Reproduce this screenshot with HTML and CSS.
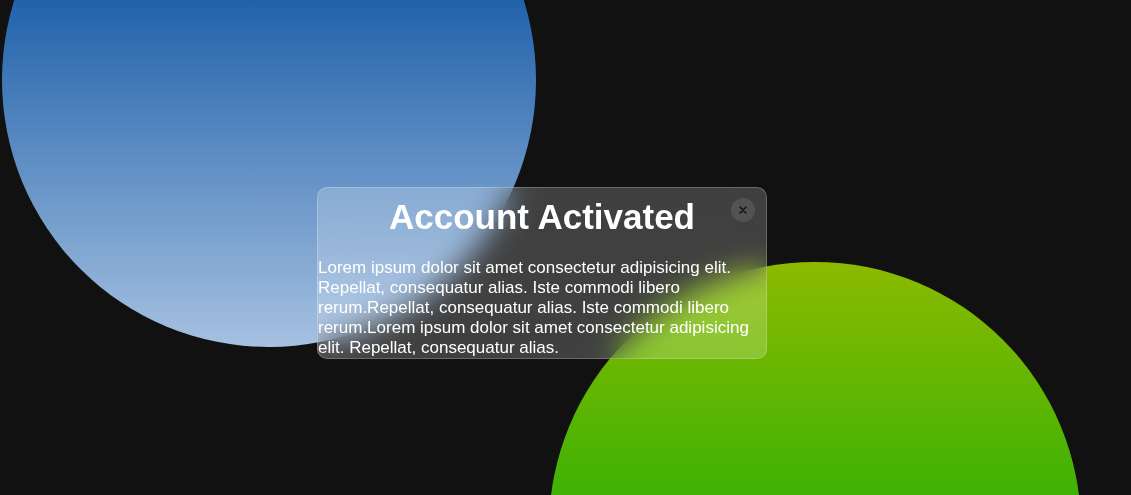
FILE: index.html
```html
<!DOCTYPE html>
<html lang="en">
<head>
<meta charset="utf-8">
<title>Account Activated</title>
<link rel="stylesheet" href="styles.css">
</head>
<body>
  <div class="scene">
    <div class="blob blob-blue"></div>
    <div class="blob blob-green"></div>
    <div class="card">
      <button class="close" aria-label="Close">
        <svg width="8" height="8" viewBox="0 0 8 8"><path d="M1 1 L7 7 M7 1 L1 7" stroke="#111" stroke-width="1.5" stroke-linecap="round"/></svg>
      </button>
      <h1 class="title">Account Activated</h1>
      <p class="text">Lorem ipsum dolor sit amet consectetur adipisicing elit. Repellat, consequatur alias. Iste commodi libero rerum.Repellat, consequatur alias. Iste commodi libero rerum.Lorem ipsum dolor sit amet consectetur adipisicing elit. Repellat, consequatur alias.</p>
    </div>
  </div>
</body>
</html>
```
FILE: styles.css
```css
html, body {
  margin: 0;
  padding: 0;
  overflow: hidden;
}
body {
  background: #111111;
  font-family: "Liberation Sans", Arial, sans-serif;
}
.scene {
  position: relative;
  height: 495px;
  overflow: hidden;
  padding-top: 187px;
  box-sizing: border-box;
}
.blob {
  position: absolute;
  border-radius: 50%;
}
.blob-blue {
  left: 2px;
  top: -187px;
  width: 534px;
  height: 534px;
  background: linear-gradient(180deg, #1c5ca6 0%, #2162aa 35%, #a6c1e1 100%);
}
.blob-green {
  left: 549px;
  top: 262px;
  width: 532px;
  height: 532px;
  background: linear-gradient(180deg, #8cba00 0%, #3cb204 45%, #2aa800 100%);
}
.card {
  position: relative;
  margin-left: 317px;
  width: 450px;
  box-sizing: border-box;
  border-radius: 10px;
  background: rgba(255, 255, 255, 0.2);
  border: 1px solid rgba(255, 255, 255, 0.22);
  backdrop-filter: blur(15px);
  -webkit-backdrop-filter: blur(15px);
  color: #ffffff;
  padding: 9px 0 0;
}
.title {
  margin: 0 0 21px;
  font-size: 35px;
  font-weight: bold;
  text-align: center;
}
.text {
  margin: 0;
  font-size: 17px;
}
.close {
  position: absolute;
  top: 10px;
  right: 11px;
  width: 24px;
  height: 24px;
  border-radius: 50%;
  border: none;
  padding: 0;
  background: rgba(255, 255, 255, 0.1);
  display: flex;
  align-items: center;
  justify-content: center;
  cursor: pointer;
}
```
